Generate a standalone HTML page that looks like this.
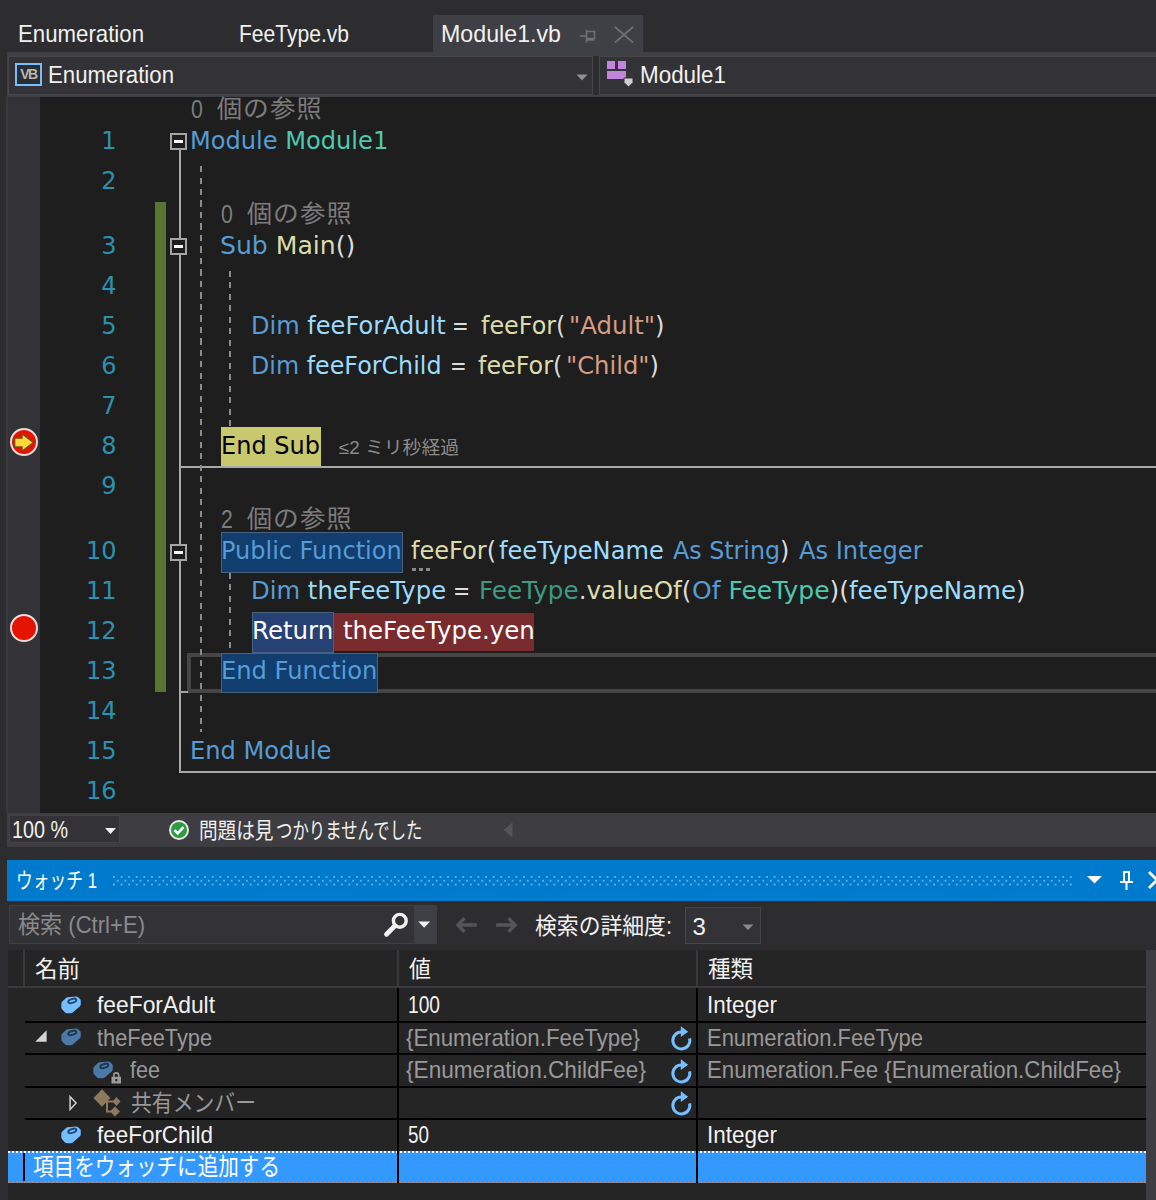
<!DOCTYPE html>
<html lang="ja">
<head>
<meta charset="utf-8">
<title>Module1.vb - Enumeration</title>
<style>
html,body{margin:0;padding:0;}
body{width:1156px;height:1200px;overflow:hidden;background:#2d2d30;position:relative;font-family:"Liberation Sans","Noto Sans CJK JP",sans-serif;color:#f1f1f1;}
div,span,svg{box-sizing:border-box;}
.a{position:absolute;}
.u{position:absolute;white-space:pre;line-height:32px;height:32px;transform-origin:0 0;font-family:"Liberation Sans","Noto Sans CJK JP",sans-serif;}
.ln{position:absolute;left:40px;width:76.5px;text-align:right;height:40px;line-height:40px;font-family:"DejaVu Sans","Liberation Sans","Noto Sans CJK JP",sans-serif;font-size:24px;color:#2b91af;white-space:pre;}
.cl{position:absolute;height:40px;line-height:40px;font-family:"DejaVu Sans","Liberation Sans","Noto Sans CJK JP",sans-serif;font-size:24px;color:#dcdcdc;white-space:pre;transform-origin:0 0;}
.k{color:#569cd6;}.t{color:#4ec9b0;}.s{color:#d69d85;}.m{color:#dcdcaa;}.v{color:#9cdcfe;}
.lens{position:absolute;height:26px;line-height:26px;font-family:"IPAGothic","Liberation Mono","Noto Sans CJK JP",monospace;font-size:26px;color:#7c7c7c;white-space:pre;letter-spacing:0.5px;}
.ld{display:inline-block;width:13px;text-align:center;font-family:"Liberation Sans",sans-serif;font-size:25px;letter-spacing:0;transform:scaleX(.85);}
</style>
</head>
<body>
<div class="a" style="left:433px;top:15px;width:210px;height:38px;background:#3f3f46;"></div>
<div class="u" style="left:18px;top:18px;font-size:24px;color:#f1f1f1;transform:scaleX(0.9259);">Enumeration</div>
<div class="u" style="left:239px;top:18px;font-size:24px;color:#f1f1f1;transform:scaleX(0.8771);">FeeType.vb</div>
<div class="u" style="left:441px;top:18px;font-size:24px;color:#f1f1f1;transform:scaleX(0.9671);">Module1.vb</div>
<svg class="a" style="left:579px;top:28px;" width="18" height="16" viewBox="0 0 18 16"><path d="M1 8h6M7.500 1.500v13M7.500 3.500h8v7h-8M7.500 12h8" fill="none" stroke="#707074" stroke-width="1.600"/></svg>
<svg class="a" style="left:613px;top:25px;" width="22" height="19" viewBox="0 0 22 19"><path d="M2 2l18 15.500M20 2L2 17.500" fill="none" stroke="#707074" stroke-width="1.700"/></svg>
<div class="a" style="left:7px;top:52px;width:1149px;height:45px;background:#3f3f46;"></div>
<div class="a" style="left:8px;top:56px;width:585px;height:39px;background:#333337;border:1px solid #46464a;"></div>
<div class="a" style="left:593px;top:56px;width:6px;height:39px;background:#2d2d30;"></div>
<div class="a" style="left:599px;top:56px;width:570px;height:39px;background:#333337;border:1px solid #46464a;"></div>
<div class="a" style="left:15px;top:63px;width:27px;height:23px;border:2px solid #75beff;background:#2d2d30;"></div>
<div class="a" style="left:17px;top:65px;width:23px;height:19px;line-height:19px;text-align:center;font-family:'Liberation Sans',sans-serif;font-weight:bold;font-size:14px;letter-spacing:-1.5px;color:#b8b8b8;">VB</div>
<div class="u" style="left:48px;top:59px;font-size:23px;color:#f1f1f1;transform:scaleX(0.9661);">Enumeration</div>
<svg class="a" style="left:576px;top:73.5px;" width="12" height="7" viewBox="0 0 12 7"><path d="M0.500 0.500h11l-5.500 6z" fill="#909090"/></svg>
<div class="a" style="left:607px;top:61px;width:7.5px;height:7.5px;background:#c186dc;"></div>
<div class="a" style="left:618px;top:61px;width:8px;height:7.5px;background:#c186dc;"></div>
<div class="a" style="left:607px;top:71px;width:19px;height:7.5px;background:#c186dc;"></div>
<svg class="a" style="left:623px;top:77px;" width="11" height="11" viewBox="0 0 11 11"><path d="M1 1h9v4.500L5.500 10 1 5.500z" fill="#d0d0d0" stroke="#333337" stroke-width="1"/></svg>
<div class="u" style="left:639.5px;top:59px;font-size:23px;color:#f1f1f1;transform:scaleX(0.9747);">Module1</div>
<div class="a" style="left:7px;top:97px;width:1149px;height:715.5px;background:#1e1e1e;"></div>
<div class="a" style="left:7px;top:97px;width:33px;height:715.5px;background:#333337;"></div>
<div class="a" style="left:6px;top:97px;width:2px;height:715.5px;background:#3a3a40;"></div>
<div class="a" style="left:155px;top:202px;width:10.5px;height:490px;background:#577430;"></div>
<div class="a" style="left:221px;top:427px;width:99.5px;height:38.5px;background:#c8c86e;"></div>
<div class="a" style="left:187px;top:652.5px;width:980px;height:40px;border:4px solid #464646;"></div>
<div class="a" style="left:221px;top:531.5px;width:181.5px;height:41px;background:#113d6f;border:1px solid #46627f;"></div>
<div class="a" style="left:334px;top:613px;width:200px;height:38px;background:#7a2b2d;"></div>
<div class="a" style="left:252px;top:612px;width:82px;height:41px;background:#264173;border:1px solid #46627f;"></div>
<div class="a" style="left:221px;top:652.5px;width:157px;height:40px;background:#113d6f;border:1px solid #46627f;"></div>
<div class="a" style="left:179.1px;top:150px;width:2.2px;height:623px;background:#a8a8a8;"></div>
<div class="a" style="left:180px;top:691px;width:7.5px;height:1.75px;background:#a3a3a3;"></div>
<div class="a" style="left:179.1px;top:465.5px;width:980px;height:2px;background:#a8a8a8;"></div>
<div class="a" style="left:179.1px;top:770.75px;width:980px;height:2.25px;background:#a8a8a8;"></div>
<div class="a" style="left:200.2px;top:165.7px;width:2px;height:566.8px;background:repeating-linear-gradient(to bottom,#8c8c8c 0,#8c8c8c 6px,transparent 6px,transparent 11.5px);"></div>
<div class="a" style="left:229px;top:271.3px;width:2px;height:154.7px;background:repeating-linear-gradient(to bottom,#8c8c8c 0,#8c8c8c 6px,transparent 6px,transparent 11.5px);"></div>
<div class="a" style="left:229px;top:573px;width:2px;height:77.5px;background:repeating-linear-gradient(to bottom,#8c8c8c 0,#8c8c8c 6px,transparent 6px,transparent 11.5px);"></div>
<div class="a" style="left:170px;top:133px;width:17px;height:17px;background:#1e1e1e;border:2px solid #a5a5a5;"><div class="a" style="left:1.7px;top:5.2px;width:9.6px;height:2.6px;background:#fff;"></div></div>
<div class="a" style="left:170px;top:238px;width:17px;height:17px;background:#1e1e1e;border:2px solid #a5a5a5;"><div class="a" style="left:1.7px;top:5.2px;width:9.6px;height:2.6px;background:#fff;"></div></div>
<div class="a" style="left:170px;top:544px;width:17px;height:17px;background:#1e1e1e;border:2px solid #a5a5a5;"><div class="a" style="left:1.7px;top:5.2px;width:9.6px;height:2.6px;background:#fff;"></div></div>
<div class="ln" style="top:121px;">1</div>
<div class="ln" style="top:161px;">2</div>
<div class="ln" style="top:226px;">3</div>
<div class="ln" style="top:266px;">4</div>
<div class="ln" style="top:306px;">5</div>
<div class="ln" style="top:346px;">6</div>
<div class="ln" style="top:386px;">7</div>
<div class="ln" style="top:426px;">8</div>
<div class="ln" style="top:466px;">9</div>
<div class="ln" style="top:531px;">10</div>
<div class="ln" style="top:571px;">11</div>
<div class="ln" style="top:611px;">12</div>
<div class="ln" style="top:651px;">13</div>
<div class="ln" style="top:691px;">14</div>
<div class="ln" style="top:731px;">15</div>
<div class="ln" style="top:771px;">16</div>
<div class="lens" style="left:190px;top:95px;"><span class="ld">0</span> 個の参照</div>
<div class="lens" style="left:220px;top:200px;"><span class="ld">0</span> 個の参照</div>
<div class="lens" style="left:220px;top:505px;"><span class="ld">2</span> 個の参照</div>
<div class="cl" style="left:190.19px;top:121px;transform:scaleX(1.0038);"><span class="k">Module</span> <span class="t">Module1</span></div>
<div class="cl" style="left:220.15px;top:226px;transform:scaleX(1.0460);"><span class="k">Sub</span> <span class="m">Main</span>()</div>
<div class="cl" style="left:251.29px;top:306px;transform:scaleX(1.0029);"><span class="k">Dim</span> <span class="v">feeForAdult</span></div>
<div class="cl" style="left:452.34px;top:306px;transform:scaleX(0.8313);">=</div>
<div class="cl" style="left:480.60px;top:306px;transform:scaleX(0.9942);"><span class="m">feeFor</span>(</div>
<div class="cl" style="left:569.17px;top:306px;transform:scaleX(1.0166);"><span class="s">"Adult"</span>)</div>
<div class="cl" style="left:251.32px;top:346px;transform:scaleX(0.9913);"><span class="k">Dim</span> <span class="v">feeForChild</span></div>
<div class="cl" style="left:449.64px;top:346px;transform:scaleX(0.8313);">=</div>
<div class="cl" style="left:478.00px;top:346px;transform:scaleX(0.9930);"><span class="m">feeFor</span>(</div>
<div class="cl" style="left:566.08px;top:346px;transform:scaleX(1.0100);"><span class="s">"Child"</span>)</div>
<div class="cl" style="left:221.00px;top:426px;transform:scaleX(1.0002);"><span style="color:#000">End Sub</span></div>
<div class="u" style="left:339px;top:432px;font-size:18px;color:#8c8c8c;transform:scaleX(1.0445);">≤2 ミリ秒経過</div>
<div class="cl" style="left:221.40px;top:531px;transform:scaleX(0.9993);"><span class="k">Public Function</span></div>
<div class="cl" style="left:411.00px;top:531px;transform:scaleX(1.0038);"><span class="m">feeFor</span>(</div>
<div class="cl" style="left:498.60px;top:531px;transform:scaleX(1.0052);"><span class="v">feeTypeName</span></div>
<div class="cl" style="left:672.50px;top:531px;transform:scaleX(0.9899);"><span class="k">As String</span>)</div>
<div class="cl" style="left:798.90px;top:531px;transform:scaleX(1.0056);"><span class="k">As Integer</span></div>
<div class="cl" style="left:250.97px;top:571px;transform:scaleX(1.0125);"><span class="k">Dim</span> <span class="v">theFeeType</span></div>
<div class="cl" style="left:453.09px;top:571px;transform:scaleX(0.8562);">=</div>
<div class="cl" style="left:479.45px;top:571px;transform:scaleX(1.0257);"><span style="color:#3e9a82">FeeType</span>.<span class="m">valueOf</span>(</div>
<div class="cl" style="left:691.96px;top:571px;transform:scaleX(1.0412);"><span class="k">Of</span> <span class="t">FeeType</span>)(</div>
<div class="cl" style="left:849.20px;top:571px;transform:scaleX(1.0186);"><span class="v">feeTypeName</span>)</div>
<div class="cl" style="left:252.16px;top:611px;transform:scaleX(1.0205);"><span style="color:#fff">Return</span></div>
<div class="cl" style="left:342.50px;top:611px;transform:scaleX(1.0175);"><span style="color:#fff">theFeeType.yen</span></div>
<div class="cl" style="left:220.99px;top:651px;transform:scaleX(1.0072);"><span class="k">End Function</span></div>
<div class="cl" style="left:190.49px;top:731px;transform:scaleX(1.0055);"><span class="k">End Module</span></div>
<div class="a" style="left:411.5px;top:568px;width:4px;height:3px;background:#8a8a8a;"></div>
<div class="a" style="left:418.5px;top:568px;width:4px;height:3px;background:#8a8a8a;"></div>
<div class="a" style="left:425.5px;top:568px;width:4px;height:3px;background:#8a8a8a;"></div>
<div class="a" style="left:9.500px;top:428px;width:28px;height:28px;border-radius:50%;background:#e51400;border:2px solid #e8dcdc;"></div>
<svg class="a" style="left:10px;top:428px;" width="28" height="28" viewBox="0 0 28 28"><path d="M4.700 10h7.300v-4.300L23.300 14.500 12 23.300v-4.300h-7.300z" fill="#ffd83b" stroke="#7a4a10" stroke-width="1.300"/></svg>
<div class="a" style="left:9.500px;top:613.500px;width:28px;height:28px;border-radius:50%;background:#e51400;border:2px solid #e8dcdc;"></div>
<div class="a" style="left:7px;top:812.5px;width:1149px;height:34.5px;background:#3e3e42;"></div>
<div class="a" style="left:9px;top:815px;width:111px;height:28px;background:#333337;border:1px solid #434346;"></div>
<div class="u" style="left:12px;top:814px;font-size:24px;color:#f1f1f1;transform:scaleX(0.8228);">100 %</div>
<svg class="a" style="left:104px;top:827px;" width="13" height="8" viewBox="0 0 13 8"><path d="M1 1h11l-5.500 6z" fill="#f1f1f1"/></svg>
<svg class="a" style="left:168px;top:819px;" width="22" height="22" viewBox="0 0 22 22"><circle cx="11" cy="11" r="10" fill="#e8e8e8"/><circle cx="11" cy="11" r="8" fill="#2f9a41"/><path d="M6.500 11.200l3.200 3.200 5.800-6.200" fill="none" stroke="#fff" stroke-width="2.600"/></svg>
<div class="u" style="left:199px;top:815px;font-size:22px;color:#f1f1f1;transform:scaleX(0.8464);">問題は見</div>
<div class="u" style="left:275.5px;top:815px;font-size:22px;color:#f1f1f1;transform:scaleX(0.7465);">つかりませんでした</div>
<svg class="a" style="left:503px;top:822px;" width="10" height="16" viewBox="0 0 10 16"><path d="M9.500 0.500v15L0.500 8z" fill="#555558"/></svg>
<div class="a" style="left:7px;top:860px;width:1149px;height:41px;background:#007acc;"></div>
<div class="u" style="left:16px;top:865px;font-size:22px;color:#fff;transform:scaleX(0.7616);">ウォッチ 1</div>
<div class="a" style="left:112.500px;top:875.700px;width:960px;height:10.400px;background-image:radial-gradient(circle at 1px 1px,#5fade3 0.900px,rgba(95,173,227,0) 1.400px),radial-gradient(circle at 1px 1px,#5fade3 0.900px,rgba(95,173,227,0) 1.400px);background-size:7.600px 7.600px,7.600px 7.600px;background-position:0 0,3.800px 3.800px;"></div>
<svg class="a" style="left:1086px;top:875px;" width="17" height="9" viewBox="0 0 17 9"><path d="M1 1h15l-7.500 7.500z" fill="#fff"/></svg>
<svg class="a" style="left:1119px;top:870px;" width="15" height="21" viewBox="0 0 15 21"><path d="M4 1h7v10h3v2H8.500v7h-2v-7H1v-2h3z M6 3v8h3V3z" fill="#fff" fill-rule="evenodd"/></svg>
<svg class="a" style="left:1148px;top:871px;" width="18" height="18" viewBox="0 0 18 18"><path d="M1 1l16 16M17 1L1 17" stroke="#fff" stroke-width="2.800"/></svg>
<div class="a" style="left:7px;top:901px;width:1149px;height:49px;background:#2d2d30;"></div>
<div class="a" style="left:8.500px;top:904.500px;width:428.500px;height:39px;background:#333337;border:1.500px solid #3f3f46;"></div>
<div class="a" style="left:414px;top:904.5px;width:23px;height:39px;background:#3f3f46;"></div>
<div class="u" style="left:17.5px;top:909px;font-size:24px;color:#8a8a8a;transform:scaleX(0.9203);">検索 (Ctrl+E)</div>
<svg class="a" style="left:383px;top:911px;" width="27" height="27" viewBox="0 0 27 27"><circle cx="16.800" cy="9.800" r="6.400" fill="none" stroke="#f1f1f1" stroke-width="3.400"/><path d="M12 14.800L3.500 23.200" stroke="#f1f1f1" stroke-width="4.800" stroke-linecap="round"/></svg>
<svg class="a" style="left:417.5px;top:921px;" width="13" height="8" viewBox="0 0 13 8"><path d="M0.300 0.500h11.700l-5.850 6.200z" fill="#f1f1f1"/></svg>
<svg class="a" style="left:455px;top:915.3px;" width="23" height="20" viewBox="0 0 23 20"><path d="M21.800 10H3.500M9.500 3.200L2.800 10l6.700 6.800" fill="none" stroke="#555558" stroke-width="3.300"/></svg>
<svg class="a" style="left:495px;top:915.3px;" width="23" height="20" viewBox="0 0 23 20"><path d="M1.200 10H19.500M13.500 3.200L20.200 10l-6.700 6.800" fill="none" stroke="#555558" stroke-width="3.300"/></svg>
<div class="u" style="left:535px;top:910px;font-size:23px;color:#f1f1f1;transform:scaleX(0.9488);">検索の詳細度:</div>
<div class="a" style="left:685px;top:907px;width:76px;height:37px;background:#333337;border:1px solid #46464a;"></div>
<div class="u" style="left:692.5px;top:911px;font-size:24px;color:#f1f1f1;">3</div>
<svg class="a" style="left:742px;top:923.5px;" width="12" height="7" viewBox="0 0 12 7"><path d="M0.500 0.500h11l-5.500 5.500z" fill="#8a8a8a"/></svg>
<div class="a" style="left:8px;top:950px;width:1138px;height:250px;background:#252526;"></div>
<div class="a" style="left:1146px;top:950px;width:10px;height:250px;background:#3e3e42;"></div>
<div class="a" style="left:8px;top:986px;width:1138px;height:2px;background:#3a3a3e;"></div>
<div class="a" style="left:23px;top:950px;width:2px;height:37px;background:#3a3a3e;"></div>
<div class="a" style="left:397px;top:950px;width:2px;height:37px;background:#3a3a3e;"></div>
<div class="a" style="left:696px;top:950px;width:2px;height:37px;background:#3a3a3e;"></div>
<div class="u" style="left:35px;top:953px;font-size:23px;color:#f1f1f1;transform:scaleX(0.9783);">名前</div>
<div class="u" style="left:409px;top:953px;font-size:23px;color:#f1f1f1;transform:scaleX(0.9565);">値</div>
<div class="u" style="left:708px;top:953px;font-size:23px;color:#f1f1f1;transform:scaleX(0.9783);">種類</div>
<div class="a" style="left:25px;top:1021px;width:1121px;height:2px;background:#000;"></div>
<div class="a" style="left:25px;top:1053.25px;width:1121px;height:2px;background:#000;"></div>
<div class="a" style="left:25px;top:1085.5px;width:1121px;height:2px;background:#000;"></div>
<div class="a" style="left:25px;top:1118.25px;width:1121px;height:2px;background:#000;"></div>
<div class="a" style="left:397px;top:988px;width:2px;height:195px;background:#000;"></div>
<div class="a" style="left:696px;top:988px;width:2px;height:195px;background:#000;"></div>
<div class="a" style="left:8px;top:1151px;width:1138px;height:32px;background:#3399ff;border-top:2px dotted #fff;border-bottom:2px dotted #e07a2c;"></div>
<div class="a" style="left:23px;top:1153px;width:2px;height:28px;background:#000;"></div>
<div class="a" style="left:397px;top:1151px;width:2px;height:32px;background:#000;"></div>
<div class="a" style="left:696px;top:1151px;width:2px;height:32px;background:#000;"></div>
<div class="u" style="left:97px;top:989px;font-size:24px;color:#f1f1f1;transform:scaleX(0.9510);">feeForAdult</div>
<div class="u" style="left:408px;top:989px;font-size:24px;color:#f1f1f1;transform:scaleX(0.7991);">100</div>
<div class="u" style="left:707px;top:989px;font-size:24px;color:#f1f1f1;transform:scaleX(0.9368);">Integer</div>
<div class="u" style="left:97px;top:1022px;font-size:24px;color:#999999;transform:scaleX(0.9073);">theFeeType</div>
<div class="u" style="left:406px;top:1022px;font-size:24px;color:#999999;transform:scaleX(0.9279);">{Enumeration.FeeType}</div>
<div class="u" style="left:707px;top:1022px;font-size:24px;color:#999999;transform:scaleX(0.9147);">Enumeration.FeeType</div>
<div class="u" style="left:130px;top:1054px;font-size:24px;color:#999999;transform:scaleX(0.8989);">fee</div>
<div class="u" style="left:406px;top:1054px;font-size:24px;color:#999999;transform:scaleX(0.9418);">{Enumeration.ChildFee}</div>
<div class="u" style="left:707px;top:1054px;font-size:24px;color:#999999;transform:scaleX(0.9291);">Enumeration.Fee {Enumeration.ChildFee}</div>
<div class="u" style="left:131px;top:1087px;font-size:23px;color:#999999;transform:scaleX(0.9058);">共有メンバー</div>
<div class="u" style="left:97px;top:1119px;font-size:24px;color:#f1f1f1;transform:scaleX(0.9350);">feeForChild</div>
<div class="u" style="left:408px;top:1119px;font-size:24px;color:#f1f1f1;transform:scaleX(0.7864);">50</div>
<div class="u" style="left:707px;top:1119px;font-size:24px;color:#f1f1f1;transform:scaleX(0.9368);">Integer</div>
<div class="u" style="left:33px;top:1151px;font-size:24px;color:#fff;transform:scaleX(0.8576);">項目をウォッチに追加する</div>
<svg class="a" style="left:60.8px;top:995.5px;" width="21" height="18" viewBox="0 0 21 18"><path d="M6.800 1.300L14.800 0.400Q16.200 0.300 17.200 1.200L19 2.900Q19.800 3.600 19.800 4.800V8.300Q19.800 9.500 18.900 10.300L11.800 16.400Q10.900 17.200 9.700 17.200H6Q4.800 17.200 4 16.400L1 13.200Q0.300 12.400 0.300 11.300V7.800Q0.300 6.500 1.300 5.600L5 2.100Q5.800 1.400 6.800 1.300z" fill="#75beff"/><ellipse cx="11.300" cy="4.900" rx="4.200" ry="1.900" transform="rotate(-18 11.300 4.900)" fill="none" stroke="#1f4a75" stroke-width="1.900"/></svg>
<svg class="a" style="left:60.8px;top:1028px;" width="21" height="18" viewBox="0 0 21 18"><path d="M6.800 1.300L14.800 0.400Q16.200 0.300 17.200 1.200L19 2.900Q19.800 3.600 19.800 4.800V8.300Q19.800 9.500 18.900 10.300L11.800 16.400Q10.900 17.200 9.700 17.200H6Q4.800 17.200 4 16.400L1 13.200Q0.300 12.400 0.300 11.300V7.800Q0.300 6.500 1.300 5.600L5 2.100Q5.800 1.400 6.800 1.300z" fill="#4b79a8"/><ellipse cx="11.300" cy="4.900" rx="4.200" ry="1.900" transform="rotate(-18 11.300 4.900)" fill="none" stroke="#1e3650" stroke-width="1.900"/></svg>
<svg class="a" style="left:93px;top:1060.7px;" width="21" height="18" viewBox="0 0 21 18"><path d="M6.800 1.300L14.800 0.400Q16.200 0.300 17.200 1.200L19 2.900Q19.800 3.600 19.800 4.800V8.300Q19.800 9.500 18.900 10.300L11.800 16.400Q10.900 17.200 9.700 17.200H6Q4.800 17.200 4 16.400L1 13.200Q0.300 12.400 0.300 11.300V7.800Q0.300 6.500 1.300 5.600L5 2.100Q5.800 1.400 6.800 1.300z" fill="#4b79a8"/><ellipse cx="11.300" cy="4.900" rx="4.200" ry="1.900" transform="rotate(-18 11.300 4.900)" fill="none" stroke="#1e3650" stroke-width="1.900"/></svg>
<svg class="a" style="left:60.8px;top:1125.5px;" width="21" height="18" viewBox="0 0 21 18"><path d="M6.800 1.300L14.800 0.400Q16.200 0.300 17.200 1.200L19 2.900Q19.800 3.600 19.800 4.800V8.300Q19.800 9.500 18.900 10.300L11.800 16.400Q10.900 17.200 9.700 17.200H6Q4.800 17.200 4 16.400L1 13.200Q0.300 12.400 0.300 11.300V7.800Q0.300 6.500 1.300 5.600L5 2.100Q5.800 1.400 6.800 1.300z" fill="#75beff"/><ellipse cx="11.300" cy="4.900" rx="4.200" ry="1.900" transform="rotate(-18 11.300 4.900)" fill="none" stroke="#1f4a75" stroke-width="1.900"/></svg>
<svg class="a" style="left:110.5px;top:1072px;" width="11" height="12" viewBox="0 0 11 12"><rect x="0.500" y="4.800" width="9.500" height="6.700" fill="#9c9c9c"/><path d="M2.800 5V3.300a2.450 2.450 0 014.900 0V5" fill="none" stroke="#9c9c9c" stroke-width="1.600"/><rect x="4.300" y="7" width="2" height="2.300" fill="#252526"/></svg>
<svg class="a" style="left:34.5px;top:1030px;" width="12" height="12" viewBox="0 0 12 12"><path d="M11.600 0.300v11.400H0.300z" fill="#d4d4d4"/></svg>
<svg class="a" style="left:68.5px;top:1094.5px;" width="9" height="16" viewBox="0 0 9 16"><path d="M1.100 1.700v12.800l6-6.400z" fill="none" stroke="#d0d0d0" stroke-width="1.500"/></svg>
<svg class="a" style="left:92px;top:1088px;" width="30" height="30" viewBox="0 0 30 30"><path d="M10 1.300l8.500 8.700-8.500 8.700-8.500-8.700z" fill="#8d7a5e"/><path d="M24.500 9l4 4.500-4 4.500-4-4.500z" fill="#8d7a5e"/><path d="M23 18.500l5 5-5 5-5-5z" fill="#8d7a5e"/><path d="M13 13.500h8.500M15 13v10.500h4.500" fill="none" stroke="#8d7a5e" stroke-width="2"/></svg>
<svg class="a" style="left:670px;top:1025px;" width="23" height="26" viewBox="0 0 23 26"><path d="M11.300 6.900A8.500 8.500 0 1 0 19.600 13.400" fill="none" stroke="#75beff" stroke-width="3"/><path d="M10.800 1.200L18.200 6.800L10.800 12z" fill="#75beff"/></svg>
<svg class="a" style="left:670px;top:1057.5px;" width="23" height="26" viewBox="0 0 23 26"><path d="M11.300 6.900A8.500 8.500 0 1 0 19.600 13.400" fill="none" stroke="#75beff" stroke-width="3"/><path d="M10.800 1.200L18.200 6.800L10.800 12z" fill="#75beff"/></svg>
<svg class="a" style="left:670px;top:1090px;" width="23" height="26" viewBox="0 0 23 26"><path d="M11.300 6.900A8.500 8.500 0 1 0 19.600 13.400" fill="none" stroke="#75beff" stroke-width="3"/><path d="M10.800 1.200L18.200 6.800L10.800 12z" fill="#75beff"/></svg>
</body>
</html>
